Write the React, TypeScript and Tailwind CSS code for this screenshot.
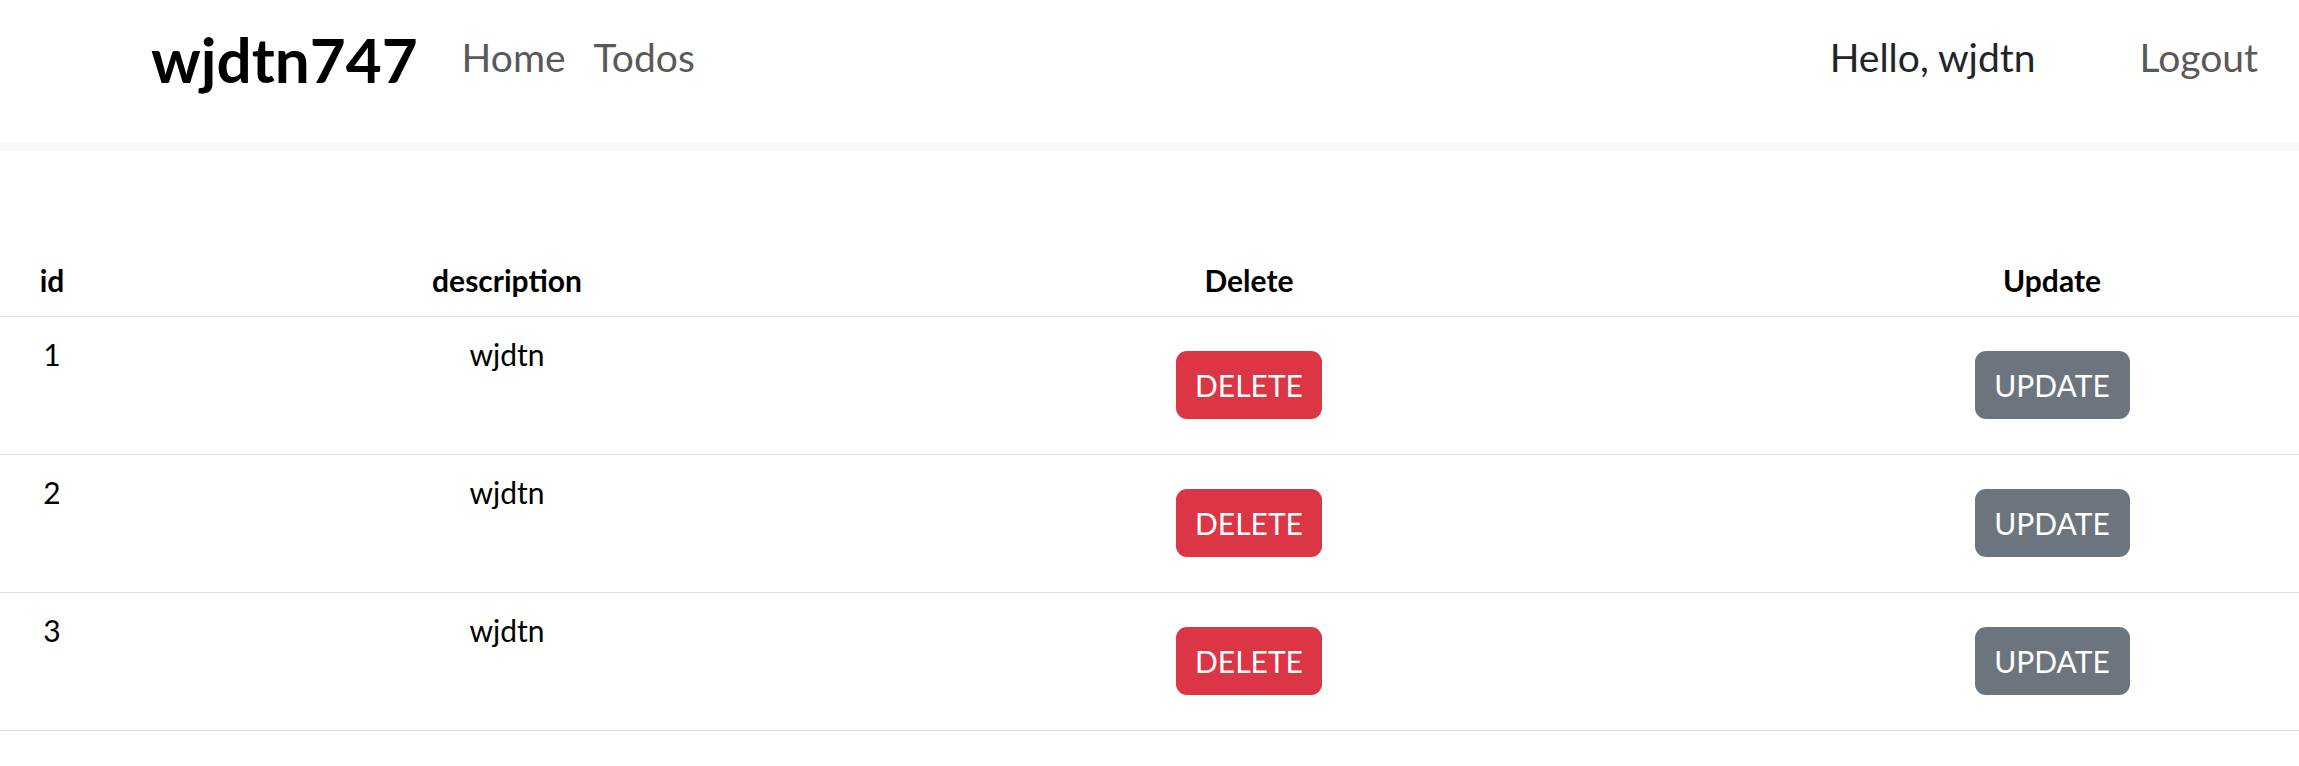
const todos = [
  { id: 1, description: "wjdtn" },
  { id: 2, description: "wjdtn" },
  { id: 3, description: "wjdtn" },
];

function Header() {
  return (
    <header className="bg-white">
      <nav className="flex items-start h-[142px] pl-[151px] pr-[41px]">
        {/* Brand */}
        <a className="mt-[14px] text-[62px] leading-[90px] font-bold text-black">
          wjdtn747
        </a>
        <ul className="flex mt-[29px] ml-[30px] text-[39px] leading-[56px] text-[#595959]">
          <li className="px-[14px]">Home</li>
          <li className="px-[14px]">Todos</li>
        </ul>
        <ul className="flex mt-[29px] ml-auto text-[39px] leading-[56px]">
          <li className="text-[#212529] mr-[104px]">Hello, wjdtn</li>
          <li className="text-[#595959]">Logout</li>
        </ul>
      </nav>
      <div className="h-[9px] bg-[#f8f9fa]" />
    </header>
  );
}

function TodoTable() {
  return (
    <table className="mt-[90px] w-full table-fixed border-collapse text-[30px] leading-[45px] text-[#212529]">
      <thead>
        <tr className="border-b border-[#dee2e6] text-black">
          <th className="w-[104px] pt-[17px] pb-[13px] font-bold text-center">id</th>
          <th className="w-[806px] pt-[17px] pb-[13px] font-bold text-center">description</th>
          <th className="w-[678px] pt-[17px] pb-[13px] font-bold text-center">Delete</th>
          <th className="pt-[17px] pb-[13px] pl-[217px] font-bold text-center">Update</th>
        </tr>
      </thead>
      <tbody>
        {todos.map((todo) => (
          <tr key={todo.id} className="border-b border-[#dee2e6] align-top">
            <td className="py-[15px] text-center text-black">{todo.id}</td>
            <td className="py-[15px] text-center text-black">{todo.description}</td>
            <td className="py-[15px] text-center">
              <button className="mt-[19px] mb-[20px] w-[146px] h-[68px] rounded-[11px] bg-[#dc3545] text-white text-[30px]">
                DELETE
              </button>
            </td>
            <td className="py-[15px] pl-[217px] text-center">
              <button className="mt-[19px] mb-[20px] w-[155px] h-[68px] rounded-[11px] bg-[#6c757d] text-white text-[30px]">
                UPDATE
              </button>
            </td>
          </tr>
        ))}
      </tbody>
    </table>
  );
}

export default function App() {
  return (
    <div className="min-h-screen bg-white font-['Lato',sans-serif]">
      <Header />
      <TodoTable />
    </div>
  );
}
